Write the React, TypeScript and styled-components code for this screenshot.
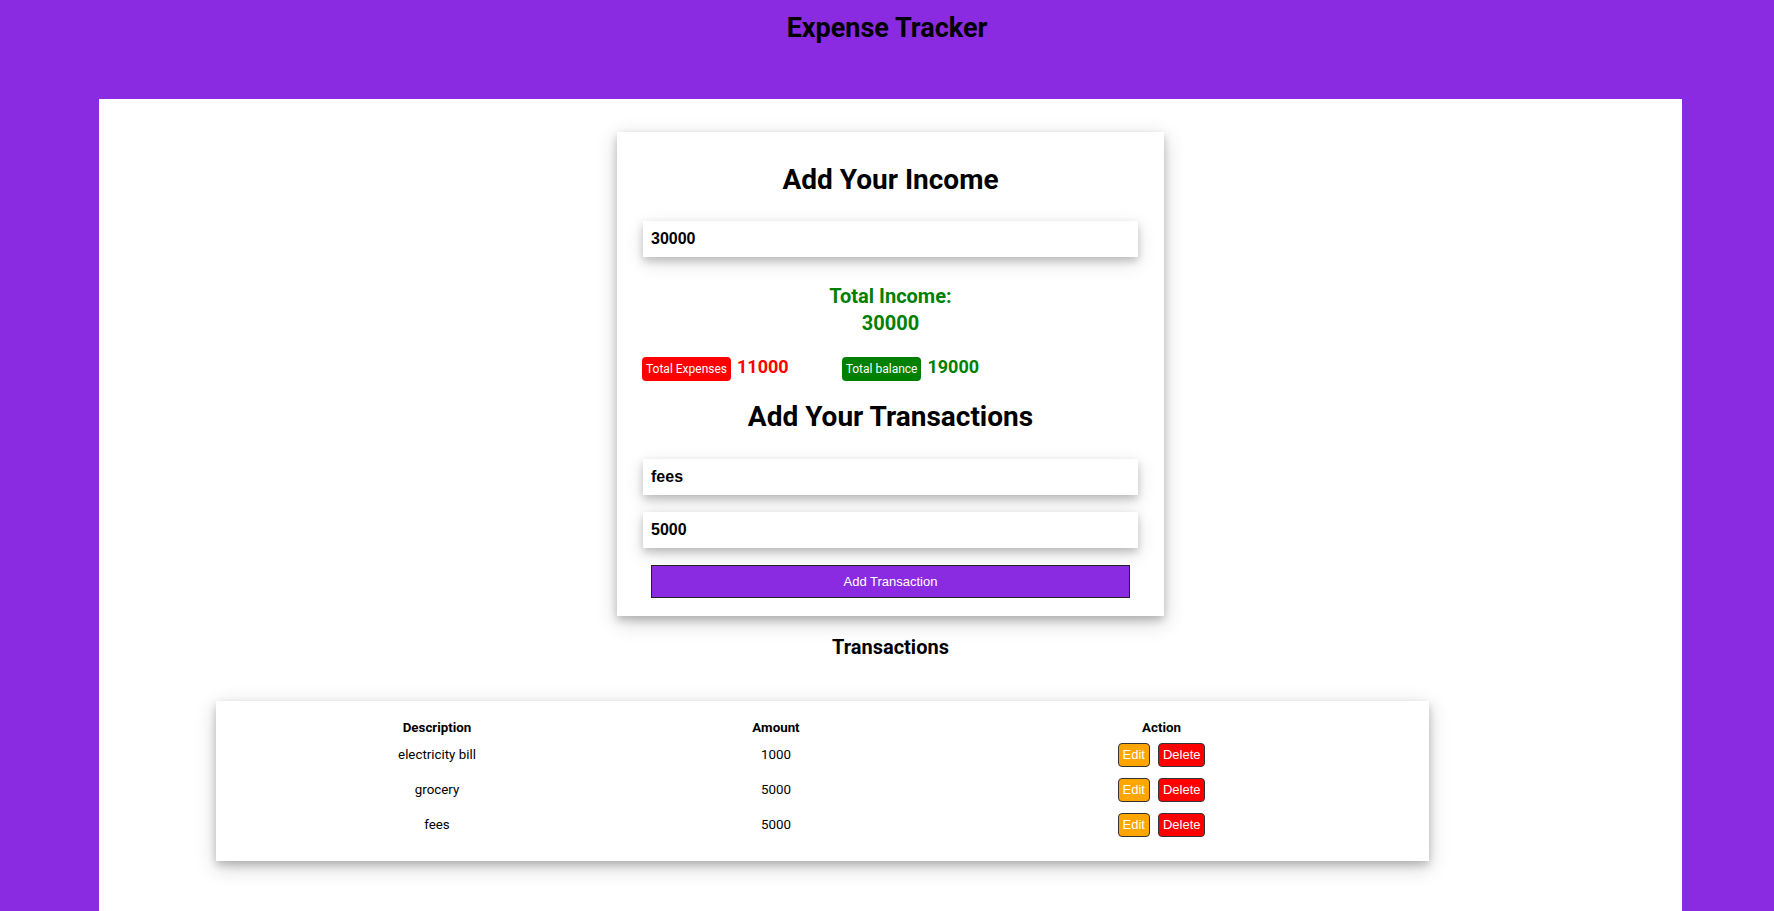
import styled, { createGlobalStyle } from 'styled-components';

const GlobalStyle = createGlobalStyle`
  body {
    margin: 0;
    background-color: #8a2be2;
    font-family: Roboto, "Open Sans", sans-serif;
  }
`;

const Header = styled.header`
  height: 99px;
  box-sizing: border-box;
  padding-top: 10px;
  text-align: center;

  & > h2 {
    margin: 0;
    font-size: 27px;
    line-height: 36px;
    font-weight: 700;
    color: #000;
  }
`;

const Main = styled.main`
  background-color: #fff;
  margin: 0 92px 0 99px;
  min-height: calc(100vh - 99px);
  padding-top: 33px;
  padding-bottom: 40px;
  box-sizing: border-box;
`;

const Card = styled.section`
  width: 547px;
  box-sizing: border-box;
  margin: 0 auto;
  padding: 29px 26px 18px;
  display: flex;
  flex-direction: column;
  box-shadow: 0 4px 8px 0 rgba(0, 0, 0, 0.2), 0 6px 20px 0 rgba(0, 0, 0, 0.19);
`;

const Heading = styled.h1<{ gap?: number }>`
  margin: ${props => props.gap ?? 0}px 0 0;
  font-size: 28px;
  line-height: 38px;
  font-weight: 700;
  text-align: center;
`;

const Field = styled.input<{ gap: number }>`
  margin-top: ${props => props.gap}px;
  height: 36px;
  box-sizing: border-box;
  padding: 0 8px;
  border: none;
  outline: none;
  font-family: "Liberation Sans", Arial, sans-serif;
  font-size: 16px;
  font-weight: 700;
  color: #000;
  background: #fff;
  box-shadow: 0 4px 8px 0 rgba(0, 0, 0, 0.2), 0 6px 20px 0 rgba(0, 0, 0, 0.12);
`;

const IncomeTotal = styled.div`
  margin-top: 26px;
  text-align: center;
  color: #008000;
  font-size: 20px;
  line-height: 26.7px;
  font-weight: 700;
`;

const Summary = styled.div`
  margin-top: 20px;
  margin-left: -1px;
  display: flex;
  gap: 53px;

  & > div {
    display: flex;
    align-items: baseline;
    gap: 6px;
  }
`;

const Badge = styled.span<{ tone: string }>`
  display: inline-block;
  height: 24px;
  line-height: 24px;
  padding: 0 4px;
  border-radius: 4px;
  font-size: 12px;
  color: #fff;
  background-color: ${props => props.tone};
`;

const Amount = styled.span<{ tone: string }>`
  font-size: 18px;
  font-weight: 700;
  color: ${props => props.tone};
`;

const AddButton = styled.button`
  margin: 17px 8px 0;
  height: 33px;
  background-color: #8a2be2;
  border: 1px solid #222;
  color: #fff;
  font-family: "Liberation Sans", Arial, sans-serif;
  font-size: 13px;
  cursor: pointer;
`;

const SubTitle = styled.h3`
  margin: 18px 0 0;
  text-align: center;
  font-size: 20px;
  line-height: 27px;
  font-weight: 700;
`;

const TableCard = styled.div`
  margin: 40px 0 0 117px;
  width: 1213px;
  box-sizing: border-box;
  padding: 16px 18px 19px;
  box-shadow: 0 4px 8px 0 rgba(0, 0, 0, 0.2), 0 6px 20px 0 rgba(0, 0, 0, 0.19);
`;

const Table = styled.table`
  width: 100%;
  border-collapse: collapse;
  font-size: 13.33px;
  text-align: center;

  th {
    height: 20px;
    padding: 0;
    font-weight: 700;
  }

  td {
    height: 35px;
    padding: 0;
    vertical-align: middle;
  }
`;

const ActionButton = styled.button<{ tone: string }>`
  height: 24px;
  box-sizing: border-box;
  padding: 0 4px;
  margin: 0 4px;
  border: 1px solid #333;
  border-radius: 4px;
  background-color: ${props => props.tone};
  color: #fff;
  font-family: "Liberation Sans", Arial, sans-serif;
  font-size: 13px;
  cursor: pointer;
`;

const transactions = [
  { id: 1, description: 'electricity bill', amount: 1000 },
  { id: 2, description: 'grocery', amount: 5000 },
  { id: 3, description: 'fees', amount: 5000 },
];

export default function App() {
  const income = 30000;
  const expenses = transactions.reduce((sum, t) => sum + t.amount, 0);

  return (
    <>
      <GlobalStyle />
      <Header>
        <h2>Expense Tracker</h2>
      </Header>
      <Main>
        <Card>
          <Heading>Add Your Income</Heading>
          <Field gap={22} type="text" defaultValue="30000" />
          <IncomeTotal>
            Total Income:
            <br />
            {income}
          </IncomeTotal>
          <Summary>
            <div>
              <Badge tone="#ff0000">Total Expenses</Badge>
              <Amount tone="#ff0000">{expenses}</Amount>
            </div>
            <div>
              <Badge tone="#008000">Total balance</Badge>
              <Amount tone="#008000">{income - expenses}</Amount>
            </div>
          </Summary>
          <Heading gap={17}>Add Your Transactions</Heading>
          <Field gap={23} type="text" defaultValue="fees" />
          <Field gap={17} type="text" defaultValue="5000" />
          <AddButton>Add Transaction</AddButton>
        </Card>

        <SubTitle>Transactions</SubTitle>

        <TableCard>
          <Table>
            <colgroup>
              <col style={{ width: 406 }} />
              <col style={{ width: 272 }} />
              <col />
            </colgroup>
            <thead>
              <tr>
                <th>Description</th>
                <th>Amount</th>
                <th>Action</th>
              </tr>
            </thead>
            <tbody>
              {transactions.map(t => (
                <tr key={t.id}>
                  <td>{t.description}</td>
                  <td>{t.amount}</td>
                  <td>
                    <ActionButton tone="#ffa500">Edit</ActionButton>
                    <ActionButton tone="#ff0000">Delete</ActionButton>
                  </td>
                </tr>
              ))}
            </tbody>
          </Table>
        </TableCard>
      </Main>
    </>
  );
}
